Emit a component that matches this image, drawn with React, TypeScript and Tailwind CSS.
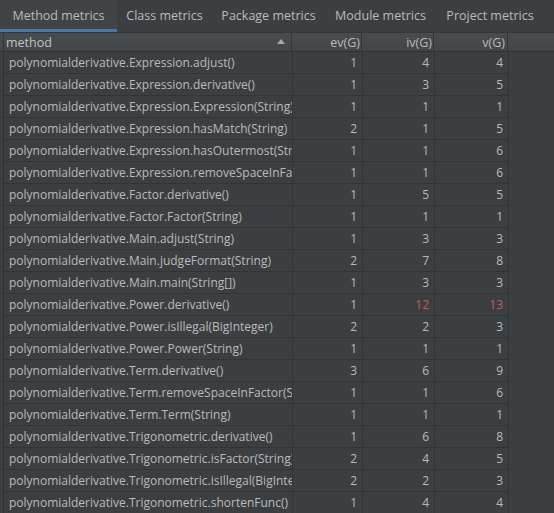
import React from "react";

type Row = { name: string; ev: number; iv: number; v: number };

const rows: Row[] = [
  { name: "polynomialderivative.Expression.adjust()", ev: 1, iv: 4, v: 4 },
  { name: "polynomialderivative.Expression.derivative()", ev: 1, iv: 3, v: 5 },
  { name: "polynomialderivative.Expression.Expression(String)", ev: 1, iv: 1, v: 1 },
  { name: "polynomialderivative.Expression.hasMatch(String)", ev: 2, iv: 1, v: 5 },
  { name: "polynomialderivative.Expression.hasOutermost(String)", ev: 1, iv: 1, v: 6 },
  { name: "polynomialderivative.Expression.removeSpaceInFactor(String)", ev: 1, iv: 1, v: 6 },
  { name: "polynomialderivative.Factor.derivative()", ev: 1, iv: 5, v: 5 },
  { name: "polynomialderivative.Factor.Factor(String)", ev: 1, iv: 1, v: 1 },
  { name: "polynomialderivative.Main.adjust(String)", ev: 1, iv: 3, v: 3 },
  { name: "polynomialderivative.Main.judgeFormat(String)", ev: 2, iv: 7, v: 8 },
  { name: "polynomialderivative.Main.main(String[])", ev: 1, iv: 3, v: 3 },
  { name: "polynomialderivative.Power.derivative()", ev: 1, iv: 12, v: 13 },
  { name: "polynomialderivative.Power.isIllegal(BigInteger)", ev: 2, iv: 2, v: 3 },
  { name: "polynomialderivative.Power.Power(String)", ev: 1, iv: 1, v: 1 },
  { name: "polynomialderivative.Term.derivative()", ev: 3, iv: 6, v: 9 },
  { name: "polynomialderivative.Term.removeSpaceInFactor(String)", ev: 1, iv: 1, v: 6 },
  { name: "polynomialderivative.Term.Term(String)", ev: 1, iv: 1, v: 1 },
  { name: "polynomialderivative.Trigonometric.derivative()", ev: 1, iv: 6, v: 8 },
  { name: "polynomialderivative.Trigonometric.isFactor(String)", ev: 2, iv: 4, v: 5 },
  { name: "polynomialderivative.Trigonometric.isIllegal(BigInteger)", ev: 2, iv: 2, v: 3 },
  { name: "polynomialderivative.Trigonometric.shortenFunc()", ev: 1, iv: 4, v: 4 },
];

const tabs = [
  { label: "Method metrics", w: "w-[117px]" },
  { label: "Class metrics", w: "w-[95px]" },
  { label: "Package metrics", w: "w-[113px]" },
  { label: "Module metrics", w: "w-[111px]" },
  { label: "Project metrics", w: "w-[108px]" },
];

// iv/v above 10 are flagged red, like the plugin does
function NumCell({ value, limit }: { value: number; limit: number }) {
  const hot = value > limit;
  return (
    <div
      className={
        "border-r border-b border-[#323435] px-[5px] text-right " +
        (hot ? "text-[#c9575c]" : "text-[#b9bbbc]")
      }
    >
      {value}
    </div>
  );
}

export default function App() {
  return (
    <div
      className="w-[554px] h-[513px] overflow-hidden bg-[#3c3f41] text-[12px] text-[#b9bbbc]"
      style={{ fontFamily: '"Open Sans", "Noto Sans", sans-serif' }}
    >
      {/* tab strip */}
      <div className="flex h-[33px] border-b border-[#333638] text-[12.5px]">
        {tabs.map((t, i) => (
          <div
            key={t.label}
            className={
              "flex items-center justify-center whitespace-nowrap shrink-0 " +
              t.w +
              (i === 0 ? " bg-[#414446] border-b-[3px] border-[#4a78a8] pt-[3px]" : "")
            }
          >
            {t.label}
          </div>
        ))}
      </div>

      {/* header */}
      <div className="flex h-[19px] bg-gradient-to-b from-[#494c4e] to-[#434648] border-b border-[#2e3032] pl-[3px] leading-[19px] text-[12.5px]">
        <div className="w-[289px] flex justify-between pl-[2px] pr-[6px] border-x border-[#333537] text-[#c2c4c5]">
          <span>method</span>
          <svg width="8" height="8" viewBox="0 0 8 8" className="self-center">
            <path d="M0 6 L4 1 L8 6 Z" fill="#a6a8a9" />
          </svg>
        </div>
        <div className="w-[70px] text-right pr-[1px] border-r border-[#333537]">ev(G)</div>
        <div className="w-[72px] text-right pr-[1px] border-r border-[#333537]">iv(G)</div>
        <div className="w-[74px] text-right pr-[2px] border-r border-[#333537]">v(G)</div>
      </div>

      {/* rows */}
      <div className="pl-[3px]">
        <div className="grid grid-cols-[289px_70px_72px_74px] auto-rows-[22px] leading-[21px] w-fit border-l border-[#2d2f31]">
          {rows.map((r) => (
            <React.Fragment key={r.name}>
              <div className="border-r border-b border-[#323435] pl-[5px] pr-[2px] whitespace-nowrap overflow-hidden">
                {r.name}
              </div>
              <NumCell value={r.ev} limit={99} />
              <NumCell value={r.iv} limit={10} />
              <NumCell value={r.v} limit={10} />
            </React.Fragment>
          ))}
        </div>
      </div>
    </div>
  );
}
